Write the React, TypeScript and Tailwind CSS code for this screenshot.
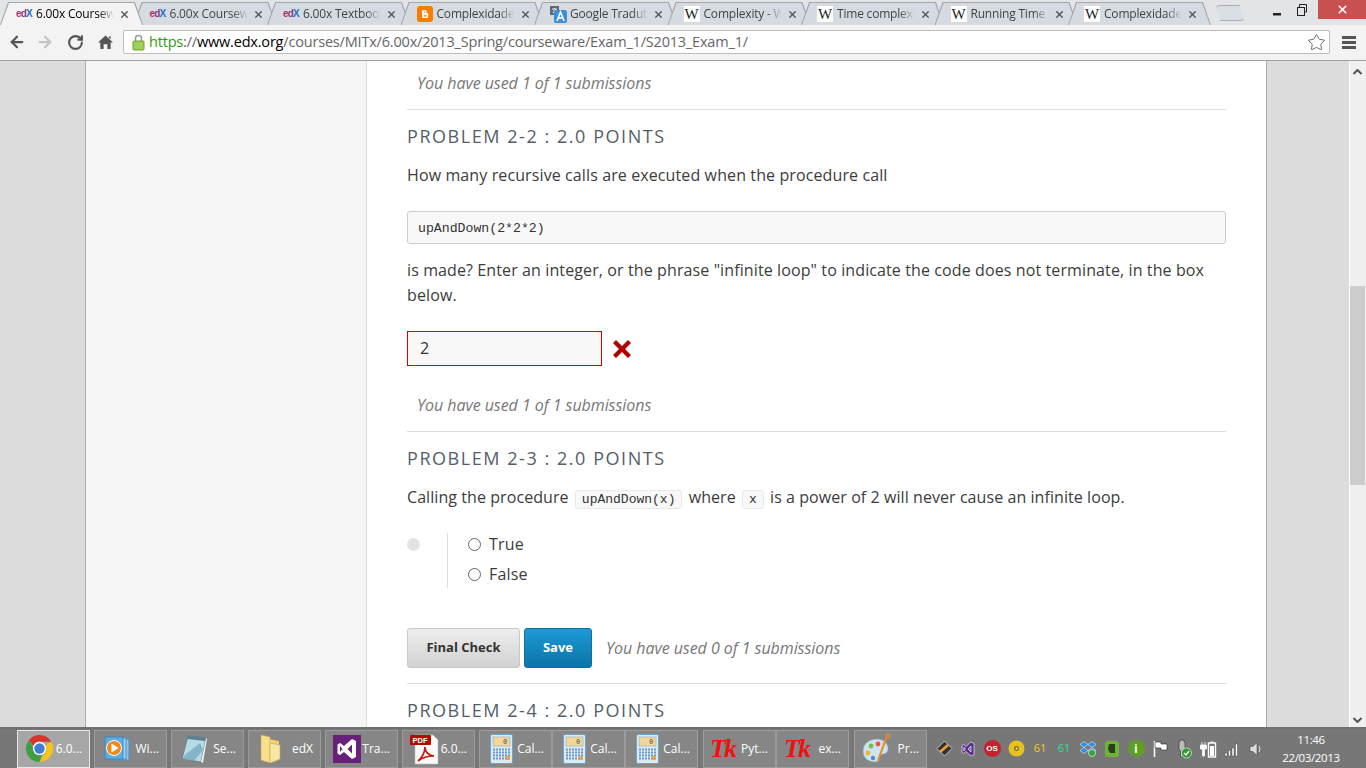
import { ArrowLeft, ArrowRight, RotateCw, Star, X } from "lucide-react";
import type { ReactNode } from "react";

const sans = "font-['Open_Sans',sans-serif]";

function EdxIcon() {
  return (
    <span className="w-[15px] font-['Liberation_Sans',sans-serif] text-[10px] font-bold leading-none tracking-[-0.8px]">
      <span className="text-[#b0326e]">e</span>
      <span className="text-[#8a3a80]">d</span>
      <span className="text-[#2a6fc0]">X</span>
    </span>
  );
}

function BloggerIcon() {
  return (
    <svg width="16" height="16" viewBox="0 0 16 16">
      <rect width="16" height="16" rx="3" fill="#f57d00" />
      <path d="M5 11V5.5C5 4.5 5.6 4 6.5 4H8c1 0 1.6.6 1.6 1.6V7h1c.4 0 .6.2.6.6v3c0 .9-.6 1.4-1.4 1.4H6.4C5.6 12 5 11.6 5 11Z" fill="#fff" />
      <path d="M6.7 6h1.6M6.7 9.8h3" stroke="#f57d00" strokeWidth="1.2" />
    </svg>
  );
}

function TranslateIcon() {
  return (
    <svg width="17" height="17" viewBox="0 0 17 17">
      <rect x="0" y="0" width="9" height="9" fill="#5b6a7a" />
      <path d="M2 3h5M4.5 2v1M3 7l3-4M3.5 4.5 6.5 7" stroke="#fff" strokeWidth="0.9" fill="none" />
      <rect x="4" y="4" width="13" height="13" rx="2" fill="#3d8fdc" />
      <path d="M7 15 10.5 6 14 15M8.4 12h4.2" stroke="#fff" strokeWidth="1.6" fill="none" />
    </svg>
  );
}

function WikiIcon() {
  return (
    <span className="flex h-[16px] w-[16px] items-center justify-center bg-white font-['Liberation_Serif',serif] text-[15px] leading-none text-[#222]">
      W
    </span>
  );
}

const tabs: { title: string; icon: ReactNode }[] = [
  { title: "6.00x Courseware", icon: <EdxIcon /> },
  { title: "6.00x Courseware", icon: <EdxIcon /> },
  { title: "6.00x Textbook", icon: <EdxIcon /> },
  { title: "Complexidade", icon: <BloggerIcon /> },
  { title: "Google Tradutor", icon: <TranslateIcon /> },
  { title: "Complexity - Wiki", icon: <WikiIcon /> },
  { title: "Time complexity", icon: <WikiIcon /> },
  { title: "Running Time", icon: <WikiIcon /> },
  { title: "Complexidade", icon: <WikiIcon /> },
];

function Tab({ title, icon, active }: { title: string; icon: ReactNode; active?: boolean }) {
  return (
    <div
      className={`relative h-[23px] w-[143px] shrink-0 bg-[#a4a7ab] pl-px pr-px pt-px [clip-path:polygon(0_100%,8px_0,calc(100%-8px)_0,100%_100%)] ${
        active ? "z-10" : "-ml-[9.5px]"
      }`}
    >
      <div
        className={`flex h-full items-center pl-[15px] [clip-path:polygon(0_100%,8px_0,calc(100%-8px)_0,100%_100%)] ${
          active ? "bg-[#f3f3f3] text-black" : "bg-[#d6dbe2] text-[#444]"
        }`}
      >
        <span className="flex w-[20px] shrink-0 items-center">{icon}</span>
        <span
          className={`w-[78px] overflow-hidden whitespace-nowrap ${sans} text-[12px] tracking-[-0.2px] [mask-image:linear-gradient(to_right,black_80%,transparent)]`}
        >
          {title}
        </span>
        <X size={11} strokeWidth={3} className="ml-[5px] text-[#555]" />
      </div>
    </div>
  );
}

function ChromeIcon() {
  return (
    <svg width="29" height="29" viewBox="0 0 28 28">
      <path d="M14 1a13 13 0 0 1 11.3 6.5H14A6.5 6.5 0 0 0 8 11.5L3.7 6A13 13 0 0 1 14 1Z" fill="#d8362c" />
      <path d="M25.3 7.5A13 13 0 0 1 14 27l5.6-9.7A6.5 6.5 0 0 0 19.6 11l5.7-3.5Z" fill="#f4c518" />
      <path d="M3.7 6 8.4 14a6.5 6.5 0 0 0 8 6L14 27A13 13 0 0 1 3.7 6Z" fill="#3f9e3f" />
      <circle cx="14" cy="14" r="6.4" fill="#fff" />
      <circle cx="14" cy="14" r="5" fill="#3e7fd3" />
    </svg>
  );
}

function MediaIcon() {
  return (
    <svg width="28" height="28" viewBox="0 0 28 28">
      <rect x="8" y="4" width="18" height="21" fill="#8cc4ea" stroke="#4a8ec2" />
      <rect x="5" y="3" width="18" height="21" fill="#a9d4f0" stroke="#4a8ec2" />
      <rect x="2" y="2" width="18" height="22" fill="#60ade0" stroke="#3d85bb" />
      <circle cx="11" cy="13" r="7.5" fill="#f08a1d" stroke="#fff" />
      <path d="M8.5 8.5v9l7-4.5Z" fill="#fff" />
    </svg>
  );
}

function NotepadIcon() {
  return (
    <svg width="30" height="32" viewBox="0 0 30 32">
      <path d="M9 3 27 5 22 29 3 26Z" fill="#b7dbe6" stroke="#56707a" strokeWidth="0.7" />
      <path d="M9 3 27 5 26.3 8 8.2 6Z" fill="#5a7f92" />
      <path d="M7 21 21 10 24 17 15 28 3 26Z" fill="#6ea6bb" opacity="0.7" />
      <path d="M22 29 27 5 28 6 24 30Z" fill="#eee" />
    </svg>
  );
}

function FolderIcon() {
  return (
    <svg width="26" height="32" viewBox="0 0 26 32">
      <path d="M3 2 12 4V30L3 27Z" fill="#f7df8f" stroke="#c9a84d" strokeWidth="0.6" />
      <path d="M5 5 21 8V27L12 30V6Z" fill="#f3cf6b" />
      <path d="M12 10 22 12V26L12 30Z" fill="#f8e6a3" stroke="#c9a84d" strokeWidth="0.6" />
    </svg>
  );
}

function VsIcon() {
  return (
    <svg width="28" height="28" viewBox="0 0 28 28">
      <rect width="28" height="28" fill="#68217a" />
      <path d="M19 4 23 6V22L19 24 11 17 7 20 4.500 18.500V9.500L7 8 11 11ZM19 9.500 14.500 14 19 18.500ZM7 11V17L9.500 14Z" fill="#fff" />
    </svg>
  );
}

function PdfIcon() {
  return (
    <svg width="30" height="32" viewBox="0 0 30 32">
      <path d="M6 2H24L29 7V31H6Z" fill="#fafafa" stroke="#bbb" strokeWidth="0.6" />
      <rect x="1" y="2" width="21" height="10" rx="1" fill="#b30b00" />
      <text x="3.500" y="10" fontSize="7.500" fontWeight="700" fill="#fff" fontFamily="Liberation Sans, sans-serif">
        PDF
      </text>
      <path d="M9 28C13 25 16 19 16 14 16 19 19 22 25 23 20 23 14 24 9 28Z" fill="none" stroke="#c81a10" strokeWidth="1.700" />
    </svg>
  );
}

function CalcIcon() {
  return (
    <svg width="23" height="30" viewBox="0 0 23 30">
      <rect x="0.500" y="0.500" width="22" height="29" rx="1.500" fill="#dbeaf3" stroke="#6aa7cc" />
      <rect x="3" y="3" width="17" height="9" fill="#f3d79a" stroke="#7aa0b5" strokeWidth="0.5" />
      <text x="13" y="10" fontSize="7" fill="#444" fontFamily="Liberation Mono, monospace">
        0
      </text>
      <path d="M3 15.500H20M3 18.500H20M3 21.500H20M3 24.500H20" stroke="#6c97c8" strokeWidth="1.800" strokeDasharray="2 1" />
      <rect x="16" y="22" width="4" height="4" fill="#e9a54a" />
    </svg>
  );
}

function TkIcon() {
  return (
    <span className="w-[30px] font-['Liberation_Serif',serif] text-[26px] font-bold italic leading-none tracking-[-2px] text-[#f01010]">
      Tk
    </span>
  );
}

function PaintIcon() {
  return (
    <svg width="34" height="34" viewBox="0 0 34 34">
      <path d="M3 19C3 11 10 7 17 7 24 7 29 12 28 18 27 23 22 21 20 24 18 27 21 30 15 30 8 30 3 26 3 19Z" fill="#cfe3ef" stroke="#7aa3bb" strokeWidth="0.7" />
      <circle cx="11" cy="14" r="2.400" fill="#6fbf4a" />
      <circle cx="18" cy="12" r="2.400" fill="#e8584f" />
      <circle cx="8" cy="21" r="2.400" fill="#f0b23a" />
      <circle cx="13" cy="26" r="2.200" fill="#4a8fd8" />
      <path d="M29 2 19 28 17 31 17.500 27 27 1Z" fill="#e88a1d" />
      <path d="M26 1H31V6L28 7Z" fill="#b78a5a" />
    </svg>
  );
}

function TaskButton({ icon, label, active }: { icon: ReactNode; label: string; active?: boolean }) {
  return (
    <div
      className={`flex h-[38px] w-[73px] shrink-0 items-center justify-between border pl-[5px] pr-[7px] ${
        active ? "border-[#e8e8e8] bg-[#a6a6a6]" : "border-[#9c9c9c] bg-[#868686]"
      }`}
    >
      <span className="flex h-[34px] w-[34px] items-center justify-center">{icon}</span>
      <span className={`${sans} whitespace-nowrap text-[12px] text-white`}>{label}</span>
    </div>
  );
}

function TrayBox({ children }: { children: ReactNode }) {
  return <span className="flex h-[20px] w-[24px] items-center justify-center">{children}</span>;
}

function Tray() {
  return (
    <div className="ml-[5px] flex items-center">
      <TrayBox>
        <svg width="17" height="17" viewBox="0 0 17 17">
          <path d="M8.500 1 16 8.500 8.500 16 1 8.500Z" fill="#333" stroke="#ddd" strokeWidth="0.8" />
          <path d="M4 12 12 5" stroke="#f0a030" strokeWidth="2.500" />
        </svg>
      </TrayBox>
      <TrayBox>
        <svg width="16" height="18" viewBox="0 0 16 18">
          <path d="M11 2 14 3.500V14.500L11 16 6 11.500 3.500 13.500 2 12.500V5.500L3.500 4.500 6 6.500ZM11 6 8 9 11 12ZM3.800 7V11L5.500 9Z" fill="#5c2d91" stroke="#fff" strokeWidth="0.6" />
        </svg>
      </TrayBox>
      <TrayBox>
        <span className="flex h-[17px] w-[17px] items-center justify-center rounded-full bg-[#c8202c] font-['Liberation_Sans',sans-serif] text-[8px] font-bold text-white">
          OS
        </span>
      </TrayBox>
      <TrayBox>
        <svg width="17" height="17" viewBox="0 0 17 17">
          <circle cx="8.500" cy="8.500" r="8" fill="#e6c21e" />
          <circle cx="8.500" cy="8.500" r="2.500" fill="#8a7410" />
          <circle cx="8.500" cy="8.500" r="1" fill="#eee" />
        </svg>
      </TrayBox>
      <TrayBox>
        <span className={`${sans} text-[11px] text-[#f2c81e]`}>61</span>
      </TrayBox>
      <TrayBox>
        <span className={`${sans} text-[11px] text-[#2ce08a]`}>61</span>
      </TrayBox>
      <TrayBox>
        <svg width="18" height="18" viewBox="0 0 18 18">
          <path d="M5 1.500 9 4.500 5 7.500 1 4.500ZM13 1.500 17 4.500 13 7.500 9 4.500ZM5 7.500 9 10.500 5 13.500 1 10.500ZM13 7.500 17 10.500 13 13.500 9 10.500Z" fill="#2f8fe0" stroke="#fff" strokeWidth="0.5" />
          <circle cx="13" cy="13" r="3.500" fill="#3aa03a" stroke="#fff" strokeWidth="0.6" />
        </svg>
      </TrayBox>
      <TrayBox>
        <svg width="16" height="18" viewBox="0 0 16 18">
          <rect x="1" y="1" width="14" height="16" rx="2.500" fill="#6fb23a" />
          <path d="M5 4H11V13H6L4 9Z" fill="#26421a" />
        </svg>
      </TrayBox>
      <TrayBox>
        <span className="flex h-[17px] w-[17px] items-center justify-center rounded-full bg-[#5f9e24] font-['Liberation_Sans',sans-serif] text-[12px] font-bold text-white">
          i
        </span>
      </TrayBox>
      <TrayBox>
        <svg width="16" height="18" viewBox="0 0 16 18">
          <path d="M2.500 1V17" stroke="#fff" strokeWidth="1.500" />
          <path d="M3 2H9V4H15V10H9V8H3Z" fill="#fff" stroke="#222" strokeWidth="0.6" />
        </svg>
      </TrayBox>
      <TrayBox>
        <svg width="18" height="20" viewBox="0 0 18 20">
          <path d="M5 1H9V3H10V10L8.500 12V18H5.500V12L4 10V3H5Z" fill="#bbb" stroke="#333" strokeWidth="0.6" />
          <circle cx="11.500" cy="14" r="5" fill="#2c9a2c" stroke="#fff" strokeWidth="0.6" />
          <path d="M9 14 11 16 14 12" stroke="#fff" strokeWidth="1.300" fill="none" />
        </svg>
      </TrayBox>
      <TrayBox>
        <svg width="18" height="18" viewBox="0 0 18 18">
          <path d="M3 2V5M6 2V5M1.500 5H7.500V9H5.500V16H3.500V9H1.500Z" fill="#fff" stroke="#fff" strokeWidth="0.8" />
          <rect x="9.500" y="3" width="7" height="14" fill="none" stroke="#fff" strokeWidth="1.400" />
          <rect x="11.500" y="1.500" width="3" height="1.500" fill="#fff" />
          <rect x="11" y="6" width="4" height="10" fill="#fff" />
        </svg>
      </TrayBox>
      <TrayBox>
        <svg width="16" height="16" viewBox="0 0 16 16">
          <path d="M1 12H3V15H1ZM4.500 9.500H6.500V15H4.500ZM8 7H10V15H8ZM11.500 3H13.500V15H11.500Z" fill="#fff" stroke="#333" strokeWidth="0.4" />
        </svg>
      </TrayBox>
      <TrayBox>
        <svg width="16" height="18" viewBox="0 0 16 18">
          <path d="M2 6.500H5L9 2.500V15.500L5 11.500H2Z" fill="#ddd" stroke="#333" strokeWidth="0.5" />
          <path d="M11 6Q13 9 11 12" stroke="#ddd" fill="none" />
        </svg>
      </TrayBox>
    </div>
  );
}

function TabStrip() {
  return (
    <div className="flex h-[25px] shrink-0 items-end bg-[#e3e4e6]">
      <div className="flex items-end">
        {tabs.map((t, i) => (
          <Tab key={i} title={t.title} icon={t.icon} active={i === 0} />
        ))}
        <div className="ml-[5px] mb-[4px] h-[16px] w-[28px] rounded-[3px] border border-[#a9afb8] bg-[#d9dee6] [clip-path:polygon(0_0,85%_0,100%_100%,15%_100%)]" />
      </div>
      <div className="ml-auto flex h-full items-start self-start">
        <svg width="10" height="19" viewBox="0 0 10 19" className="mr-[14px]">
          <rect x="1" y="13" width="8" height="2.500" fill="#222" />
        </svg>
        <svg width="12" height="19" viewBox="0 0 12 19" className="mr-[10px]">
          <rect x="1.500" y="7.500" width="7" height="8" fill="#e3e4e6" stroke="#222" />
          <path d="M3.500 7V4.500H10.500V12H9" fill="none" stroke="#222" />
        </svg>
        <div className="flex h-[19px] w-[48px] items-center justify-center bg-[#c75050]">
          <X size={13} strokeWidth={3} className="text-white" />
        </div>
      </div>
    </div>
  );
}

function Toolbar() {
  return (
    <div className="flex h-[36px] shrink-0 items-center border-b border-[#a0a0a0] bg-[#f3f3f3] pb-[1px]">
      <div className="flex w-[123px] shrink-0 items-center pl-[8px]">
        <ArrowLeft size={18} strokeWidth={3} className="text-[#555]" />
        <ArrowRight size={18} strokeWidth={3} className="ml-[10px] text-[#c4c4c4]" />
        <RotateCw size={17} strokeWidth={3} className="ml-[13px] text-[#555]" />
        <svg width="15" height="16" viewBox="0 0 16 16" className="ml-[14px]">
          <path d="M8 1 16 8.500H13.500V15.500H10V10.500H6V15.500H2.500V8.500H0ZM11.500 2H13.500V5L11.500 3.500Z" fill="#555" />
        </svg>
      </div>
      <div className="flex h-[24px] w-[1207px] shrink-0 items-center rounded-[2px] border border-[#bdbdbd] bg-white pl-[8px] pr-[3px]">
        <svg width="13" height="17" viewBox="0 0 13 17" className="shrink-0">
          <path d="M3.500 7V4.500a3 3 0 0 1 6 0V7" fill="none" stroke="#999" strokeWidth="1.500" />
          <rect x="1" y="7" width="11" height="9" rx="1" fill="#9fd05a" stroke="#6d9c30" />
        </svg>
        <span className={`ml-[4px] whitespace-nowrap ${sans} text-[14.5px] leading-none tracking-[-0.19px] text-[#666]`}>
          <span className="text-[#2f9a10]">https</span>://<span className="text-black">www.edx.org</span>
          /courses/MITx/6.00x/2013_Spring/courseware/Exam_1/S2013_Exam_1/
        </span>
        <Star size={19} strokeWidth={1.2} className="ml-auto text-[#666]" />
      </div>
      <div className="ml-[12px] flex w-[14px] flex-col gap-[2px]">
        <span className="h-[3px] bg-[#555]" />
        <span className="h-[3px] bg-[#555]" />
        <span className="h-[3px] bg-[#555]" />
      </div>
    </div>
  );
}

function Submissions({ used, className }: { used: number; className?: string }) {
  return (
    <p className={`text-[16px] italic leading-[24px] tracking-[-0.06px] text-[#777] ${className ?? ""}`}>
      You have used {used} of 1 submissions
    </p>
  );
}

function Heading({ children, className }: { children: ReactNode; className?: string }) {
  return (
    <h2 className={`text-[18px] font-normal uppercase leading-[24px] tracking-[1.55px] text-[#555e68] ${className ?? ""}`}>
      {children}
    </h2>
  );
}

function InlineCode({ children }: { children: ReactNode }) {
  return (
    <code className="mx-[2px] rounded-[3px] border border-[#e8e8e8] bg-[#f8f8f8] px-[6px] py-[1px] font-['Liberation_Mono',monospace] text-[13px] tracking-normal text-[#333]">
      {children}
    </code>
  );
}

function Radio({ label }: { label: string }) {
  return (
    <label className="flex h-[30px] items-center gap-[8px]">
      <span className="h-[13px] w-[13px] rounded-full border border-[#666] bg-white" />
      <span className="text-[16px] tracking-[0.2px] text-[#3c3c3c]">{label}</span>
    </label>
  );
}

function Problems() {
  return (
    <div className={`${sans} px-[40px] text-[#3c3c3c]`}>
      <Submissions used={1} className="mt-[10px] pl-[10px]" />
      <hr className="mt-[14px] border-[#dddddd]" />
      <Heading className="mt-[14px]">Problem 2-2 : 2.0 points</Heading>
      <p className="mt-[15px] text-[16px] leading-[25px] tracking-[0.11px]">
        How many recursive calls are executed when the procedure call
      </p>
      <pre className="mt-[23px] flex h-[33px] items-center rounded-[3px] border border-[#cccccc] bg-[#f8f8f8] px-[10px] pt-[2px] font-['Liberation_Mono',monospace] text-[13.200px] text-[#333]">
        upAndDown(2*2*2)
      </pre>
      <p className="mt-[14px] text-[16px] leading-[25px] tracking-[0.11px]">
        is made? Enter an integer, or the phrase "infinite loop" to indicate the code does not terminate, in the box below.
      </p>
      <div className="mt-[23px] flex items-center">
        <input
          readOnly
          value="2"
          className={`h-[35px] w-[195px] border border-[#dd0000] bg-[#f8f8f8] px-[12px] pb-[2px] ${sans} text-[16px] text-[#333]`}
        />
        <svg width="20" height="20" viewBox="0 0 20 20" className="ml-[10px]">
          <path d="M4 1 10 7 16 1 19 4 13 10 19 16 16 19 10 13 4 19 1 16 7 10 1 4Z" fill="#b20000" />
        </svg>
      </div>
      <Submissions used={1} className="mt-[27px] pl-[10px]" />
      <hr className="mt-[14px] border-[#dddddd]" />
      <Heading className="mt-[14px]">Problem 2-3 : 2.0 points</Heading>
      <p className="mt-[15px] text-[16px] leading-[25px] tracking-[0.07px]">
        Calling the procedure <InlineCode>upAndDown(x)</InlineCode> where <InlineCode>x</InlineCode> is a power of 2 will never cause an
        infinite loop.
      </p>
      <div className="mt-[21px] flex">
        <div className="w-[41px] shrink-0 border-r border-[#dddddd]">
          <span className="mt-[5px] block h-[13px] w-[13px] rounded-full bg-[#e3e3e3]" />
        </div>
        <div className="-mt-[4px] -mb-[1px] pl-[20px]">
          <Radio label="True" />
          <Radio label="False" />
        </div>
      </div>
      <div className="mt-[40px] flex items-center">
        <button className="h-[40px] w-[113px] rounded-[3px] border border-[#c8c8c8] bg-gradient-to-b from-[#eeeeee] to-[#d2d2d2] text-[13px] font-bold text-[#333]">
          Final Check
        </button>
        <button className="ml-[4px] h-[40px] w-[68px] rounded-[3px] border border-[#0f6f9f] bg-gradient-to-b from-[#1d9ad6] to-[#0b74a8] text-[13px] font-bold text-white">
          Save
        </button>
        <Submissions used={0} className="ml-[14px]" />
      </div>
      <hr className="mt-[15px] border-[#dddddd]" />
      <Heading className="mt-[14px]">Problem 2-4 : 2.0 points</Heading>
    </div>
  );
}

function Taskbar() {
  return (
    <div className="flex h-[41px] shrink-0 items-center border-t-2 border-[#707070] bg-[#777777] pl-[17px]">
      <div className="flex gap-[4px]">
        <TaskButton icon={<ChromeIcon />} label="6.0..." active />
        <TaskButton icon={<MediaIcon />} label="Wi..." />
        <TaskButton icon={<NotepadIcon />} label="Se..." />
        <TaskButton icon={<FolderIcon />} label="edX" />
        <TaskButton icon={<VsIcon />} label="Tra..." />
        <TaskButton icon={<PdfIcon />} label="6.0..." />
      </div>
      <div className="ml-[4px] flex">
        <TaskButton icon={<CalcIcon />} label="Cal..." />
        <TaskButton icon={<CalcIcon />} label="Cal..." />
        <TaskButton icon={<CalcIcon />} label="Cal..." />
      </div>
      <div className="ml-[5px] flex">
        <TaskButton icon={<TkIcon />} label="Pyt..." />
        <TaskButton icon={<TkIcon />} label="ex..." />
      </div>
      <div className="ml-[5px]">
        <TaskButton icon={<PaintIcon />} label="Pr..." />
      </div>
      <Tray />
      <div className={`flex w-[86px] flex-col items-center pt-[1px] ${sans} text-[11.500px] leading-[18px] tracking-[-0.35px] text-white`}>
        <span>11:46</span>
        <span>22/03/2013</span>
      </div>
    </div>
  );
}

export default function App() {
  return (
    <div className="flex h-screen w-full flex-col overflow-hidden bg-[#dcdcdc]">
      <TabStrip />
      <Toolbar />
      <div className="flex min-h-0 flex-1 overflow-hidden">
        <div className="w-[86px] shrink-0 border-r border-[#aaaaaa]" />
        <div className="w-[281px] shrink-0 border-r border-[#dddddd] bg-[#f6f6f6]" />
        <div className="w-[899px] shrink-0 bg-white">
          <Problems />
        </div>
        <div className="min-w-0 flex-1 border-l border-[#aaaaaa]" />
        <div className="flex w-[17px] shrink-0 flex-col items-start border-l border-white bg-[#f0f0f0] pt-[8px]">
          <svg width="9" height="7" viewBox="0 0 9 7" className="ml-[3px]">
            <path d="M.5 5 4.500 1 8.500 5" fill="none" stroke="#555" strokeWidth="2" />
          </svg>
          <div className="mt-[210px] h-[199px] w-[15px] bg-[#cdcdcd]" />
          <svg width="9" height="7" viewBox="0 0 9 7" className="ml-[3px] mt-auto mb-[4px]">
            <path d="M.5 2 4.500 6 8.500 2" fill="none" stroke="#555" strokeWidth="2" />
          </svg>
        </div>
      </div>
      <Taskbar />
    </div>
  );
}
